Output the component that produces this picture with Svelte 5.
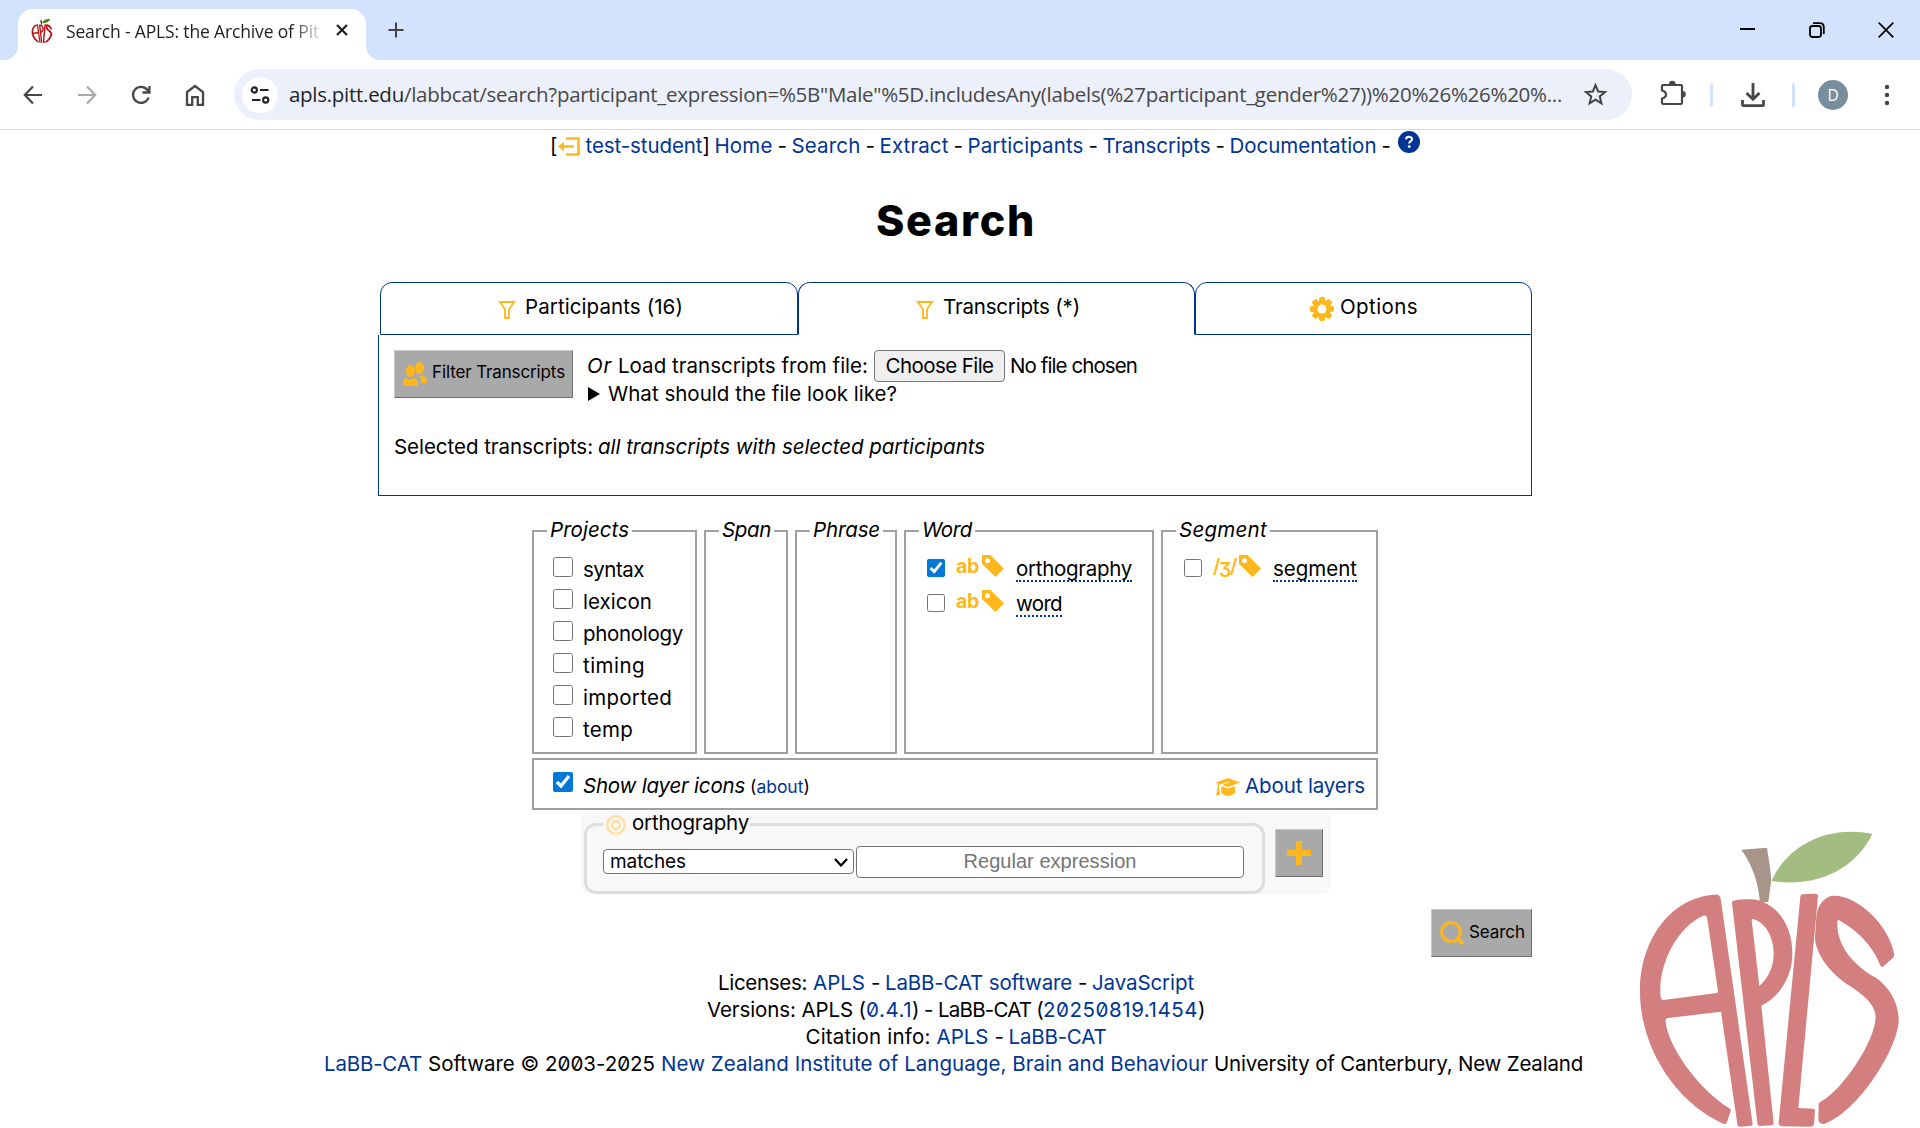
<script>
  // Spreads a label's letters so that it fills the given width.
  function fit(node, width) {
    const natural = node.getBoundingClientRect().width;
    const count = node.textContent.length;
    node.style.letterSpacing = `${(width - natural) / count}px`;
  }

  const nav = [
    ['Home', 58], ['Search', 69], ['Extract', 69],
    ['Participants', 116], ['Transcripts', 108], ['Documentation', 147]
  ];
  const projects = [
    ['syntax', 61], ['lexicon', 69], ['phonology', 100],
    ['timing', 62], ['imported', 89], ['temp', 50]
  ];
  const footer = [
    [['Licenses:', 89], ['APLS', 52, 1], ['-', 8], ['LaBB-CAT software', 187, 1], ['-', 8], ['JavaScript', 102, 1]],
    [['Versions: APLS (', 159], ['0.4.1', 46, 1, 1], [')', 6, 0, 1], ['-', 8], ['LaBB-CAT (', 105], ['20250819.1454', 155, 1, 1], [')', 7, 0, 1]],
    [['Citation info:', 125], ['APLS', 52, 1], ['-', 8], ['LaBB-CAT', 98, 1]],
    [['LaBB-CAT', 98, 1], ['Software © 2003-2025', 227], ['New Zealand Institute of Language, Brain and Behaviour', 547, 1], ['University of Canterbury, New Zealand', 369]]
  ];
</script>

{#snippet apple(cls)}
  <svg class={cls} viewBox="0 0 900 924" aria-label="APLS">
    <path class="stem" d="M364 89L441 83C446 120 455 160 453 185L445 246L420 247C415 190 400 140 364 89Z" />
    <path class="leaf" d="M454 183C505 70 630 15 757 42C710 140 600 205 454 183Z" />
    <g class="flesh" fill-rule="evenodd">
      <path d="M298 228Q302 232 303 242L398 912Q398 917 392 918L358 920Q353 920 352 912L303 575L145 594Q135 595 137 605C142 670 225 800 330 866Q334 869 332 874L320 908Q317 914 310 911C170 850 60 685 60 515C60 350 160 230 285 224Q294 223 298 228ZM250 287C190 310 117 410 121 520Q121 541 130 540L290 519Q295 518 294 514L261 292Q258 285 250 287Z" />
      <path d="M338 243C350 238 395 234 420 242C480 262 517 325 517 400C517 470 480 530 424 557L461 910Q461 916 455 916L418 918Q412 918 412 910L336 249Q336 245 338 243ZM398 297C435 305 461 350 461 400C461 440 445 475 418 498L395 300Q395 296 398 297Z" />
      <path d="M548 223L588 221Q594 222 594 228L535 864L580 866Q585 867 585 873L582 912Q580 920 572 920L485 919Q475 917 476 908L541 230Q542 223 548 223Z" />
      <path d="M640 227C710 225 805 310 822 400Q824 408 819 413L789 440Q785 442 781 437C765 390 720 335 660 302Q653 297 652 305C650 370 690 430 770 475C810 505 836 550 836 600C836 680 720 870 615 911Q605 914 598 907Q595 904 595 898L596 852Q597 847 605 843C660 815 765 670 767 590C767 560 740 530 690 498C630 460 585 400 585 350L589 290C592 250 620 227 640 227Z" />
    </g>
  </svg>
{/snippet}

{#snippet funnel()}
  <svg class="funnel" viewBox="0 0 18 18"><path d="M1.8 1H16.2L11 8.2V17H7V8.2Z" fill="none" stroke="#ffb81c" stroke-width="1.8" /></svg>
{/snippet}

{#snippet tag()}
  <svg class="tag" viewBox="0 0 22 22"><path fill-rule="evenodd" d="M0 0H8.5L22 13.5L13.5 22L0 9ZM5.5 3.2A2.5 2.5 0 1 0 5.5 8.2A2.5 2.5 0 1 0 5.5 3.2Z" fill="#ffb81c" /></svg>
{/snippet}

<div class="strip">
  <div class="tab">
    {@render apple('favicon')}
    <span class="title" use:fit={253}>Search - APLS: the Archive of Pit</span>
    <svg class="close" viewBox="0 0 12 12"><path d="M1 1L11 11M11 1L1 11" stroke="#1f1f1f" stroke-width="2.2" /></svg>
  </div>
  <svg class="new" viewBox="0 0 16 16"><path d="M8 .5V15.5M.5 8H15.5" stroke="#444" stroke-width="2" /></svg>
  <div class="window">
    <svg viewBox="0 0 16 16"><path d="M0 7H15" stroke="#000" stroke-width="2" /></svg>
    <svg viewBox="0 0 16 16" fill="none" stroke="#000" stroke-width="1.8"><rect x="1" y="4" width="11" height="11" rx="2.4" /><path d="M4 1.2H11Q14.8 1.2 14.8 5V12" /></svg>
    <svg viewBox="0 0 16 16"><path d="M.7 .7L15.3 15.3M15.3 .7L.7 15.3" stroke="#000" stroke-width="1.7" /></svg>
  </div>
</div>

<div class="toolbar">
  <div class="buttons">
    <svg viewBox="0 0 24 24" fill="none" stroke="#474747" stroke-width="2.2"><path d="M21 12H4M12 3.5L3.8 12L12 20.5" /></svg>
    <svg viewBox="0 0 24 24" fill="none" stroke="#a8a8a8" stroke-width="2.2"><path d="M3 12H20M12 3.5L20.2 12L12 20.5" /></svg>
    <svg viewBox="0 0 24 24" fill="none" stroke="#474747" stroke-width="2.3"><path d="M19.6 14.5A8 8 0 1 1 18.2 6.8L20 9M20.4 3V9.5H13.5" /></svg>
    <svg viewBox="0 0 24 24" fill="none" stroke="#474747" stroke-width="2.3"><path d="M4 21.8V9L12 3L20 9V21.8H14.8V14.2H9.2V21.8Z" /></svg>
  </div>
  <div class="address">
    <span class="site"><svg viewBox="0 0 20 18" fill="none" stroke="#222" stroke-width="2.1"><circle cx="4.3" cy="4" r="2.6" /><path d="M10 4H18.5M2 14H10.5" /><circle cx="15.7" cy="14" r="2.6" /></svg></span>
    <span class="url" use:fit={1273}><b>apls.pitt.edu</b>/labbcat/search?participant_expression=%5B"Male"%5D.includesAny(labels(%27participant_gender%27))%20%26%26%20%...</span>
    <svg class="star" viewBox="0 0 24 24"><path d="M12 3L14.5 9.1L21.2 9.6L16.1 13.9L17.7 20.5L12 16.9L6.3 20.5L7.9 13.9L2.8 9.6L9.5 9.1Z" fill="none" stroke="#444" stroke-width="1.9" /></svg>
  </div>
  <svg class="puzzle" viewBox="0 0 26 26"><path d="M3 5H21Q22 5 22 6V23Q22 24 21 24H3Q2 24 2 23V18.5Q6 17.5 6 14.5Q6 11.5 2 10.5V6Q2 5 3 5Z" fill="none" stroke="#474747" stroke-width="2.2" /><path d="M9 4A3.3 3.3 0 0 1 15.6 4ZM22.5 11A3.3 3.3 0 0 1 22.5 17.6Z" fill="#474747" /></svg>
  <i class="rule"></i>
  <svg class="download" viewBox="0 0 24 24" fill="none" stroke="#474747" stroke-width="2.8"><path d="M12 0V16M5.5 10L12 16.3L18.5 10M1.5 17V21.5Q1.5 22.6 2.6 22.6H21.4Q22.5 22.6 22.5 21.5V17" /></svg>
  <i class="rule second"></i>
  <span class="avatar">D</span>
  <svg class="dots" viewBox="0 0 6 22" fill="#444"><circle cx="3" cy="3" r="2.2" /><circle cx="3" cy="11" r="2.2" /><circle cx="3" cy="19" r="2.2" /></svg>
</div>

<main>
  {@render apple('logo')}
  <nav>
    <span>[</span>
    <svg class="logout" viewBox="0 0 22 20"><path d="M8 1.5H20.5V17.5H8M3 9.5H16" fill="none" stroke="#ffb81c" stroke-width="2.6" /><path d="M0 9.5L6 4.8V14.2Z" fill="#ffb81c" /></svg>
    <a class="user" use:fit={117}>test-student</a><span class="bracket">]</span>
    {#each nav as [label, width]}
      <a use:fit={width}>{label}</a><span class="dash">-</span>
    {/each}
    <svg class="help" viewBox="0 0 22 22"><circle cx="11" cy="11" r="11" fill="#003594" /><path d="M8 8.3Q8.2 5.8 11 5.8Q14 5.9 14 8.2Q14 9.6 12.3 10.5Q11.2 11.1 11.2 12.5" fill="none" stroke="#fff" stroke-width="2" /><circle cx="11.2" cy="15.6" r="1.4" fill="#fff" /></svg>
  </nav>
  <h1><span use:fit={160}>Search</span></h1>

  <div class="tabs">
    <div class="t1">{@render funnel()}<span use:fit={158}>Participants (16)</span></div>
    <div class="t2">{@render funnel()}<span use:fit={137}>Transcripts (*)</span></div>
    <div class="t3">
      <svg class="gear" viewBox="-12 -12 24 24"><g fill="#ffb81c">{#each [0, 45, 90, 135] as a}<rect x="-3" y="-12" width="6" height="24" rx="1.8" transform="rotate({a})" />{/each}</g><circle r="6.7" fill="none" stroke="#ffb81c" stroke-width="4.6" /><circle r="4.5" fill="#fff" /></svg>
      <span use:fit={78}>Options</span>
    </div>
  </div>
  <section class="panel">
    <div class="load">
      <button class="grey filter">
        <svg viewBox="0 0 24 24" fill="#ffb81c"><ellipse cx="16.5" cy="6" rx="4.5" ry="6" /><path d="M18 21V17L16 14.5Q18.5 13 21 14Q24 15.2 24 21Z" /><g stroke="#a9a9a9" stroke-width="1"><ellipse cx="7.5" cy="9" rx="5" ry="6.5" /></g><path d="M0 24V21Q0 17 3.5 16Q7.5 19 11.5 16Q15 17 15 21V24Z" /></svg>
        <span use:fit={133}>Filter Transcripts</span>
      </button>
      <div class="file">
        <div class="choose"><em use:fit={25}>Or</em><span use:fit={250}>Load transcripts from file:</span><button><span use:fit={108}>Choose File</span></button><span class="none" use:fit={127}>No file chosen</span></div>
        <div class="what"><svg viewBox="0 0 12 14"><path d="M0 0L12 7L0 14Z" /></svg><span use:fit={289}>What should the file look like?</span></div>
      </div>
    </div>
    <p><span use:fit={199}>Selected transcripts:</span><em use:fit={387}>all transcripts with selected participants</em></p>
  </section>

  <div class="layers">
    <div class="box projects">
      <em class="legend"><span use:fit={79}>Projects</span></em>
      {#each projects as [label, width]}
        <label><input type="checkbox" /><span use:fit={width}>{label}</span></label>
      {/each}
    </div>
    <div class="box span"><em class="legend"><span use:fit={49}>Span</span></em></div>
    <div class="box phrase"><em class="legend"><span use:fit={67}>Phrase</span></em></div>
    <div class="box word">
      <em class="legend"><span use:fit={50}>Word</span></em>
      <label><input type="checkbox" checked /><b use:fit={23}>ab</b>{@render tag()}<span class="dotted" use:fit={116}>orthography</span></label>
      <label><input type="checkbox" /><b use:fit={23}>ab</b>{@render tag()}<span class="dotted" use:fit={46}>word</span></label>
    </div>
    <div class="box segment">
      <em class="legend"><span use:fit={88}>Segment</span></em>
      <label><input type="checkbox" /><b class="ipa" use:fit={23}>/ʒ/</b>{@render tag()}<span class="dotted" use:fit={84}>segment</span></label>
    </div>
  </div>
  <div class="icons">
    <input type="checkbox" checked />
    <em use:fit={162}>Show layer icons</em>
    <small>(<a use:fit={47}>about</a>)</small>
    <svg class="cap" viewBox="0 0 24 18" fill="#ffb81c"><path d="M12 0L24 4.5L12 9L6 6.8L13 4.8L12.5 4L3.5 6.5L2.8 9.5Q4 10.5 3.2 11.5L4 17H0L1.5 11.5Q.8 10.5 1.7 9.5L2.2 6L0 4.5Z" /><path d="M5.5 8.2L12 10.6L18.7 8.2L19.3 14.5Q16 18 12 18Q8 18 5 14.5Z" /></svg>
    <a use:fit={120}>About layers</a>
  </div>

  <div class="search">
    <div class="pattern">
      <div class="name">
        <svg viewBox="0 0 20 20" fill="none" stroke="#fde0a2" stroke-width="2.4"><circle cx="10" cy="10" r="8.8" /><circle cx="10" cy="10" r="4" /></svg>
        <span use:fit={117}>orthography</span>
      </div>
      <div class="fields">
        <div class="select"><span use:fit={76}>matches</span><svg viewBox="0 0 14 9"><path d="M1 1L7 7.5L13 1" fill="none" stroke="#000" stroke-width="2.2" /></svg></div>
        <div class="input"><span use:fit={173}>Regular expression</span></div>
      </div>
    </div>
    <button class="grey plus"><svg viewBox="0 0 24 24"><path d="M12 0V24M0 12H24" stroke="#ffb81c" stroke-width="6" /></svg></button>
  </div>
  <div class="submit">
    <button class="grey">
      <svg viewBox="0 0 24 24" fill="none" stroke="#ffb81c"><circle cx="11" cy="11" r="9.3" stroke-width="3" /><path d="M17.5 17.5L23 23" stroke-width="4" /></svg>
      <span use:fit={56}>Search</span>
    </button>
  </div>

  <footer>
    {#each footer as line}
      <div>
        {#each line as [text, width, link, tight]}
          <span class:link class:tight use:fit={width}>{text}</span>
        {/each}
      </div>
    {/each}
  </footer>
</main>

<style>
  :global(body) { background: #fff; overflow: hidden; }
  :global(#app) { font-family: Inter, 'Liberation Sans', sans-serif; font-size: 20.5px; line-height: 27px; color: #000; }
  svg { display: block; flex: none; }
  span, a, em, b { white-space: nowrap; flex: none; }
  em { font-style: italic; }
  a, .link { color: #003594; }
  button { font: inherit; color: #000; padding: 0; }

  .strip { height: 60px; box-sizing: border-box; padding: 9px 26px 0 18px; background: #d3e3fd; display: flex; }
  .tab { position: relative; width: 348px; height: 51px; background: #fff; border-radius: 15px 15px 0 0; display: flex; align-items: center; box-sizing: border-box; padding: 0 18px 9px 13px; font-family: 'Open Sans', 'Noto Sans', sans-serif; font-size: 17.5px; color: #1f1f1f; }
  .tab::before, .tab::after { content: ''; position: absolute; bottom: 0; width: 15px; height: 15px; }
  .tab::before { left: -15px; background: radial-gradient(circle at 0 0, transparent 15px, #fff 15.5px); }
  .tab::after { right: -15px; background: radial-gradient(circle at 100% 0, transparent 15px, #fff 15.5px); }
  .favicon { width: 24px; height: 25px; margin-left: -1px; }
  .favicon .flesh { fill: #b8141a; }
  .favicon .stem { fill: #4a2c1c; }
  .favicon .leaf { fill: #45800f; }
  .title { margin-left: 12px; padding-top: 3px; mask-image: linear-gradient(90deg, #000 89%, rgba(0, 0, 0, 0.15)); }
  .close { width: 12px; height: 12px; margin-left: auto; }
  .new { width: 16px; height: 16px; margin: 13px 0 0 22px; }
  .window { display: flex; gap: 53px; margin: 13px 0 0 auto; }
  .window svg { width: 16px; height: 16px; }

  .toolbar { height: 70px; box-sizing: border-box; border-bottom: 1px solid #dcdcdc; display: flex; align-items: center; padding-left: 21px; }
  .buttons { display: flex; gap: 30px; width: 213px; }
  .buttons svg { width: 24px; height: 24px; }
  .address { width: 1398px; height: 51px; border-radius: 26px; background: #ecf0fa; display: flex; align-items: center; box-sizing: border-box; padding-left: 8px; }
  .site { width: 36px; height: 36px; border-radius: 50%; background: #fff; display: grid; place-items: center; }
  .site svg { width: 20px; height: 18px; }
  .url { font-family: 'Open Sans', 'Noto Sans', sans-serif; font-size: 20.5px; color: #474747; margin-left: 11px; padding-bottom: 1px; }
  .url b { font-weight: 400; color: #1f1f1f; }
  .star { width: 25px; height: 25px; margin-left: 21px; }
  .puzzle { width: 26px; height: 26px; margin: 0 0 3px 28px; }
  .rule { width: 3px; height: 24px; border-radius: 2px; background: #d3e3fd; margin-left: 24px; }
  .download { width: 24px; height: 24px; margin-left: 28px; }
  .rule.second { margin-left: 27px; }
  .avatar { width: 30px; height: 30px; border-radius: 50%; background: #788f9b; color: #fff; font: 15.5px/30px 'Open Sans', sans-serif; text-align: center; margin-left: 23px; }
  .dots { width: 6px; height: 22px; margin-left: 36px; }

  main { position: relative; height: 998px; }
  .logo { position: absolute; left: 1620px; top: 690px; width: 300px; height: 308px; }
  .logo .flesh { fill: #d47f7f; }
  .logo .stem { fill: #a69588; }
  .logo .leaf { fill: #a3bd81; }

  nav { display: flex; padding: 2px 0 0 550px; height: 27px; }
  nav .logout { width: 22px; height: 20px; margin: 5px 5px 0 1px; }
  nav > a { margin-left: 6px; }
  nav > a.user { margin-left: 0; }
  nav .bracket { width: 6px; }
  .dash { margin-left: 5px; width: 8px; text-align: center; }
  .help { width: 22px; height: 22px; margin: -1px 0 0 9px; }
  h1 { margin: 36px 0 0 876px; height: 50px; font-size: 43px; line-height: 50px; font-weight: 800; display: flex; }

  .tabs { display: flex; margin: 37px 0 0 380px; height: 53px; }
  .tabs > div { box-sizing: border-box; border: 1px solid #003594; border-radius: 12px 12px 0 0; display: flex; padding-top: 10px; }
  .t1 { width: 418px; padding-left: 117px; }
  .tabs .t2 { width: 397px; padding-left: 117px; border-bottom-color: transparent; }
  .t3 { width: 337px; padding-left: 114px; }
  .funnel { width: 18px; height: 18px; margin: 8px 9px 0 0; }
  .gear { width: 24px; height: 24px; margin: 4px 6px 0 0; }
  .panel { box-sizing: border-box; width: 1154px; height: 161px; margin-left: 378px; border: 1px solid #003594; border-top: 0; padding: 15px 0 0 15px; }
  .load { display: flex; height: 62px; }
  .grey { box-sizing: border-box; height: 48px; background: #a9a9a9; border: 1px solid; border-color: #c9c9c9 #6f6f6f #6f6f6f #c9c9c9; font-size: 17px; display: flex; align-items: flex-start; }
  .grey svg { width: 24px; height: 24px; margin-top: 11px; }
  .grey span { line-height: 22px; margin: 10px 0 0 5px; }
  .filter { width: 179px; padding-left: 8px; }
  .file { margin-left: 14px; }
  .choose { display: flex; height: 32px; line-height: 31px; }
  .choose > span { margin-left: 6px; }
  .choose button { box-sizing: border-box; width: 131px; height: 32px; border: 1px solid #767676; border-radius: 4px; background: #efefef; margin-left: 6px; line-height: 28px; }
  .choose button span { display: inline-block; }
  .choose > .none { margin-left: 5px; }
  .what { display: flex; height: 27px; margin-top: -2px; }
  .what svg { width: 12px; height: 14px; margin: 7px 8px 0 1px; }
  .panel p { margin: 21px 0 0; display: flex; gap: 5px; }

  .layers { display: flex; gap: 7px; margin: 34px 0 0 532px; }
  .box { box-sizing: border-box; height: 224px; border: 2px solid #a0a0a0; }
  .legend { display: flex; width: fit-content; margin: -15px 0 0 13px; padding: 0 3px; height: 26px; line-height: 26px; background: #fff; }
  .projects { width: 165px; }
  .span { width: 84px; }
  .phrase { width: 102px; }
  .word { width: 250px; }
  .segment { width: 217px; }
  label { display: flex; align-items: center; }
  input { width: 20px; height: 20px; margin: 0; flex: none; accent-color: #0078d7; }
  .projects .legend { margin-bottom: 10px; }
  .projects label { height: 32px; padding-left: 19px; gap: 10px; }
  .projects input { margin-bottom: 5px; }
  .word .legend, .segment .legend { margin-bottom: 8px; }
  .word label, .segment label { height: 35px; padding-left: 21px; }
  .word input, .segment input { width: 18px; height: 18px; margin-bottom: 1px; }
  label b { color: #ffb81c; font-size: 19.5px; font-weight: 700; margin: -4px 0 0 11px; }
  label .ipa { font-weight: 600; }
  .tag { width: 22px; height: 22px; margin: -5px 12px 0 3px; }
  .dotted { border-bottom: 2px dotted #003594; line-height: 23px; margin-top: 2px; }

  .icons { box-sizing: border-box; width: 846px; height: 52px; margin: 4px 0 0 532px; border: 2px solid #a0a0a0; display: flex; align-items: center; padding: 3px 11px 0 19px; }
  .icons input { margin: 0 10px 7px 0; }
  .icons small { font-size: 17.5px; margin-left: 5px; padding-top: 1px; display: flex; }
  .cap { width: 24px; height: 18px; margin: 3px 5px 0 auto; }

  .search { box-sizing: border-box; width: 750px; height: 83px; margin: 1px 0 0 581px; background: #f8f8f8; border-radius: 9px; padding-left: 3px; display: flex; }
  .pattern { box-sizing: border-box; width: 681px; height: 71px; margin-top: 12px; border: 3px solid #dedede; border-radius: 12px; }
  .name { display: flex; width: fit-content; height: 24px; line-height: 22px; margin: -14px 0 0 16px; padding: 0 1px 0 3px; background: #f8f8f8; }
  .name svg { width: 20px; height: 20px; margin: 3px 6px 0 0; }
  .fields { display: flex; margin: 10px 0 0 16px; }
  .select { box-sizing: border-box; width: 251px; height: 25px; margin-top: 3px; border: 1px solid #767676; border-radius: 4px; background: #fff; font-size: 19px; line-height: 23px; display: flex; justify-content: space-between; padding: 0 5px 0 6px; }
  .select svg { width: 14px; height: 9px; margin-top: 8px; }
  .input { box-sizing: border-box; width: 388px; height: 32px; margin-left: 2px; border: 1px solid #767676; border-radius: 4px; background: #fff; color: #757575; font: 20px/29px 'Liberation Sans', sans-serif; display: flex; justify-content: center; }
  .plus { width: 48px; margin: 18px 0 0 10px; padding-left: 11px; }
  .submit { display: flex; margin: 15px 0 0 1431px; }
  .submit button { width: 101px; padding-left: 8px; }
  .submit .grey span { margin-top: 11px; }

  footer { margin-top: 12px; font-feature-settings: 'zero'; }
  footer div { display: flex; justify-content: center; gap: 6px; width: 1912px; }
  footer div:last-child { width: 1907px; }
  .tight { margin-left: -6px; }
</style>
